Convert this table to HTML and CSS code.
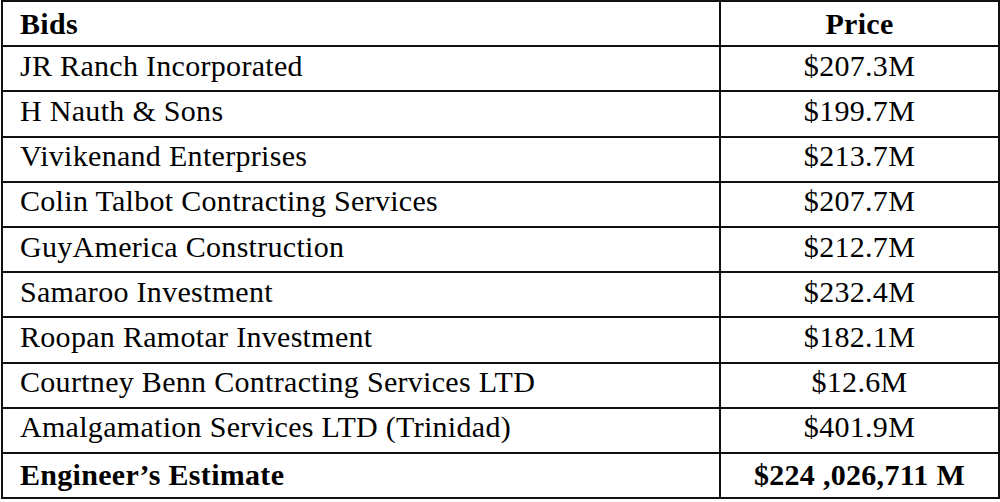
FILE: index.html
```html
<!DOCTYPE html>
<html>
<head>
<meta charset="utf-8">
<link rel="stylesheet" href="styles.css">
</head>
<body>
<table class="bids">
  <colgroup>
    <col class="col-name">
    <col class="col-price">
  </colgroup>
  <thead>
    <tr><th class="name">Bids</th><th class="price">Price</th></tr>
  </thead>
  <tbody>
    <tr><td class="name">JR Ranch Incorporated</td><td class="price">$207.3M</td></tr>
    <tr><td class="name">H Nauth &amp; Sons</td><td class="price">$199.7M</td></tr>
    <tr><td class="name">Vivikenand Enterprises</td><td class="price">$213.7M</td></tr>
    <tr><td class="name">Colin Talbot Contracting Services</td><td class="price">$207.7M</td></tr>
    <tr><td class="name">GuyAmerica Construction</td><td class="price">$212.7M</td></tr>
    <tr><td class="name">Samaroo Investment</td><td class="price">$232.4M</td></tr>
    <tr><td class="name">Roopan Ramotar Investment</td><td class="price">$182.1M</td></tr>
    <tr><td class="name">Courtney Benn Contracting Services LTD</td><td class="price">$12.6M</td></tr>
    <tr><td class="name">Amalgamation Services LTD (Trinidad)</td><td class="price">$401.9M</td></tr>
  </tbody>
  <tfoot>
    <tr><th class="name">Engineer’s Estimate</th><th class="price">$224 ,026,711 M</th></tr>
  </tfoot>
</table>
</body>
</html>
```

FILE: styles.css
```css
html, body {
  margin: 0;
  padding: 0;
  background: #fff;
}
.bids {
  margin: 0 0 0 1px;
  width: 997px;
  table-layout: fixed;
  border-collapse: collapse;
  font-family: "Liberation Serif", "Times New Roman", serif;
  font-size: 30px;
  letter-spacing: 0.3px;
  color: #000;
  border: 2px solid #111;
}
.col-name {
  width: 718px;
}
.col-price {
  width: 279px;
}
.bids tr {
  height: 45.2px;
}
.bids th, .bids td {
  border: 2px solid #111;
  padding: 0;
  vertical-align: middle;
  line-height: 1;
  white-space: nowrap;
}
.bids tbody td {
  padding-bottom: 6px;
}
.bids th {
  font-weight: bold;
}
.bids .name {
  text-align: left;
  padding-left: 17px;
}
.bids .price {
  text-align: center;
}
```
